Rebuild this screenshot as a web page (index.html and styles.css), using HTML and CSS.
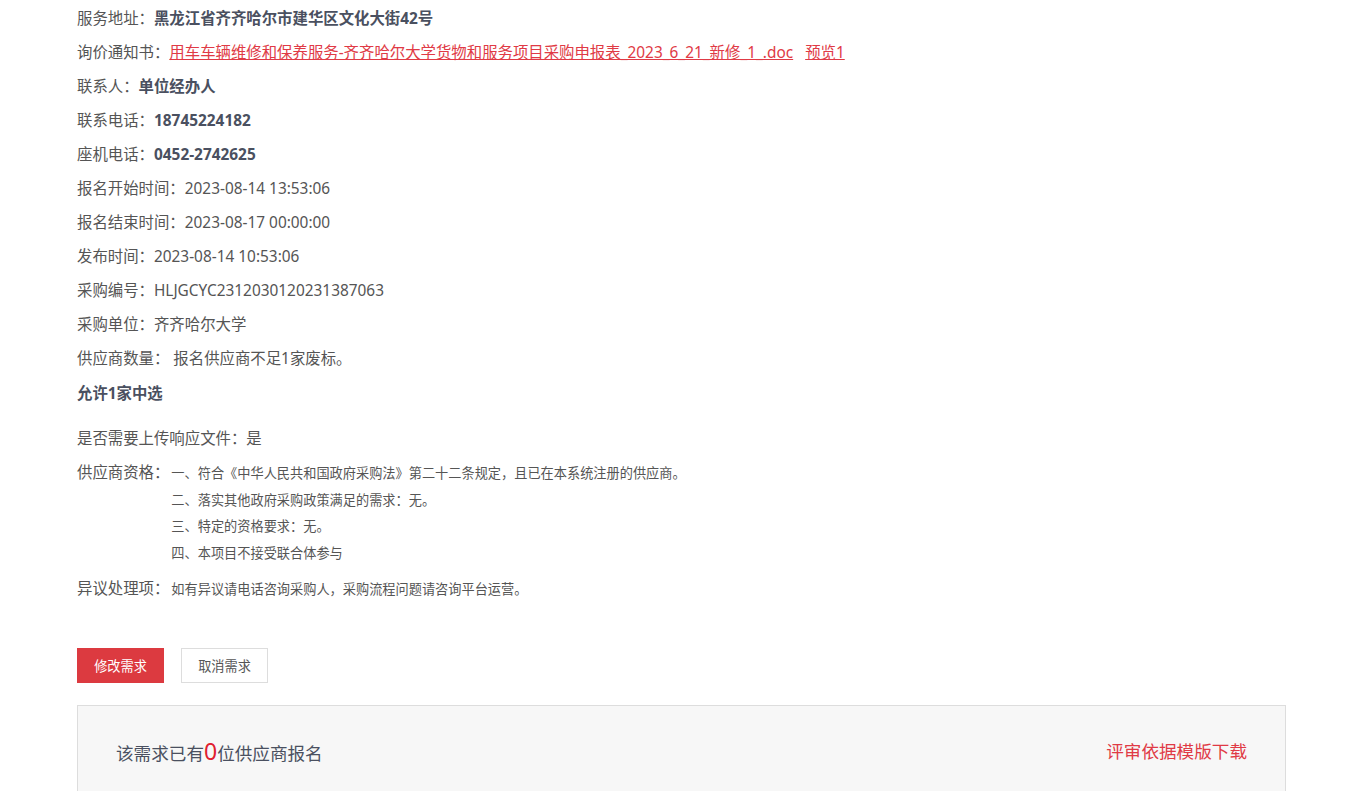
FILE: index.html
```html
<!DOCTYPE html>
<html lang="zh-CN">
<head>
    <meta charset="UTF-8">
    <meta name="viewport" content="width=device-width, initial-scale=1.0">
    <title>需求详情</title>
    <link rel="stylesheet" href="styles.css">
</head>
<body>
    <div class="container">
        <div class="info">
            <div class="row">服务地址：<b>黑龙江省齐齐哈尔市建华区文化大街42号</b></div>
            <div class="row">询价通知书：<a href="#" class="link">用车车辆维修和保养服务-齐齐哈尔大学货物和服务项目采购申报表_2023_6_21_新修_1_.doc</a><a href="#" class="link preview">预览1</a></div>
            <div class="row">联系人：<b>单位经办人</b></div>
            <div class="row">联系电话：<b>18745224182</b></div>
            <div class="row">座机电话：<b>0452-2742625</b></div>
            <div class="row">报名开始时间：2023-08-14 13:53:06</div>
            <div class="row">报名结束时间：2023-08-17 00:00:00</div>
            <div class="row">发布时间：2023-08-14 10:53:06</div>
            <div class="row">采购编号：HLJGCYC2312030120231387063</div>
            <div class="row">采购单位：齐齐哈尔大学</div>
            <div class="row">供应商数量： 报名供应商不足1家废标。</div>
            <div class="row allow"><b>允许1家中选</b></div>
            <div class="row upload">是否需要上传响应文件：是</div>

            <div class="qual">
                <span class="label">供应商资格：</span>
                <ul class="qual-list">
                    <li>一、符合《中华人民共和国政府采购法》第二十二条规定，且已在本系统注册的供应商。</li>
                    <li>二、落实其他政府采购政策满足的需求：无。</li>
                    <li>三、特定的资格要求：无。</li>
                    <li>四、本项目不接受联合体参与</li>
                </ul>
            </div>
            <div class="qual objection">
                <span class="label">异议处理项：</span>
                <span class="small">如有异议请电话咨询采购人，采购流程问题请咨询平台运营。</span>
            </div>
        </div>

        <div class="actions">
            <button class="btn btn-primary">修改需求</button>
            <button class="btn">取消需求</button>
        </div>

        <div class="signup-box">
            <div class="count">该需求已有<span class="num">0</span>位供应商报名</div>
            <a href="#" class="download">评审依据模版下载</a>
        </div>
    </div>
</body>
</html>
```

FILE: styles.css
```css
body {
    margin: 0;
    padding: 0;
    font-family: "Noto Sans", "Noto Sans CJK SC", sans-serif;
    color: #555;
    background: #fff;
}
.container {
    padding: 2px 83px 0 77px;
}
.row {
    font-size: 15.4px;
    line-height: 34px;
    white-space: nowrap;
}
.row b {
    color: #4a5060;
    font-weight: bold;
}
.link {
    color: #e03a45;
    text-decoration: underline;
}
.preview {
    margin-left: 12px;
}
.allow {
    margin-top: 1px;
}
.upload {
    margin-top: 11px;
}
.qual {
    display: flex;
    margin-top: 4px;
    font-size: 15.4px;
    line-height: 26.5px;
}
.qual .label {
    flex: none;
    margin-right: 2px;
}
.qual-list {
    list-style: none;
    margin: 0;
    padding: 0;
    font-size: 13.2px;
}
.objection {
    margin-top: 10px;
}
.small {
    font-size: 13.2px;
}
.actions {
    display: flex;
    gap: 17px;
    margin-top: 45px;
}
.btn {
    width: 87px;
    height: 35px;
    border: 1px solid #ddd;
    background: #fff;
    color: #555;
    font-family: inherit;
    font-size: 13.2px;
    cursor: pointer;
}
.btn-primary {
    background: #dc3a40;
    border-color: #dc3a40;
    color: #fff;
}
.signup-box {
    display: flex;
    justify-content: space-between;
    margin-top: 22px;
    padding: 30px 38px 40px;
    background: #f7f7f7;
    border: 1px solid #ddd;
    font-size: 17.6px;
    line-height: 30px;
}
.count {
    color: #4a5060;
}
.num {
    color: #e0202e;
    font-size: 23px;
}
.download {
    color: #e03a45;
    text-decoration: none;
}
```
